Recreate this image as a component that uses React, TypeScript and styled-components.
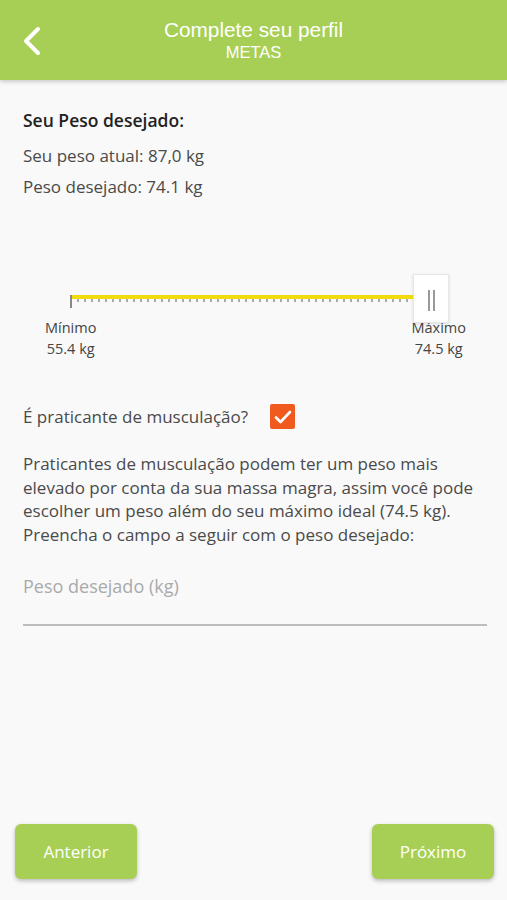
import React, { useState } from "react";
import styled, { createGlobalStyle } from "styled-components";

const GlobalStyle = createGlobalStyle`
  html, body {
    margin: 0;
    padding: 0;
    background: #f9f9f9;
  }
  body {
    font-family: "Open Sans", "Noto Sans", sans-serif;
  }
`;

const GREEN = "#a8cf55";

export default function App() {
  const [isBodybuilder, setIsBodybuilder] = useState<boolean>(true);

  return (
    <>
      <GlobalStyle />
      <Page>
        <Header>
          <BackBtn aria-label="voltar">
            <svg width="20" height="30" viewBox="0 0 20 30">
              <path
                d="M16 3 L4 15 L16 27"
                fill="none"
                stroke="#ffffff"
                strokeWidth="4"
                strokeLinecap="round"
                strokeLinejoin="round"
              />
            </svg>
          </BackBtn>
          <HeaderTitle>Complete seu perfil</HeaderTitle>
          <HeaderSub>METAS</HeaderSub>
        </Header>

        <Content>
          <SectionTitle>Seu Peso desejado:</SectionTitle>
          <InfoLine>Seu peso atual: 87,0 kg</InfoLine>
          <InfoLine>Peso desejado: 74.1 kg</InfoLine>

          <SliderBlock>
            <TrackArea>
              <Track>
                <Ticks />
              </Track>
              <Thumb>
                <Grip />
                <Grip />
              </Thumb>
            </TrackArea>
            <SliderLabels>
              <RangeLabel>
                Mínimo
                <br />
                55.4 kg
              </RangeLabel>
              <RangeLabel>
                Máximo
                <br />
                74.5 kg
              </RangeLabel>
            </SliderLabels>
          </SliderBlock>

          <CheckRow>
            <span>É praticante de musculação?</span>
            <CheckBox
              $checked={isBodybuilder}
              onClick={() => setIsBodybuilder(!isBodybuilder)}
            >
              {isBodybuilder && (
                <svg width="18" height="14" viewBox="0 0 18 14">
                  <path
                    d="M2 7.5 L6.5 12 L16 2"
                    fill="none"
                    stroke="#ffffff"
                    strokeWidth="2.6"
                    strokeLinecap="round"
                    strokeLinejoin="round"
                  />
                </svg>
              )}
            </CheckBox>
          </CheckRow>

          <Paragraph>
            Praticantes de musculação podem ter um peso mais elevado por conta
            da sua massa magra, assim você pode escolher um peso além do seu
            máximo ideal (74.5 kg). Preencha o campo a seguir com o peso
            desejado:
          </Paragraph>

          <WeightInput type="text" placeholder="Peso desejado (kg)" />
        </Content>

        <Footer>
          <NavButton>Anterior</NavButton>
          <NavButton>Próximo</NavButton>
        </Footer>
      </Page>
    </>
  );
}

const Page = styled.div`
  min-height: 900px;
  display: flex;
  flex-direction: column;
  background: #f9f9f9;
`;

const Header = styled.header`
  position: relative;
  height: 80px;
  background: ${GREEN};
  box-shadow: 0 2px 4px rgba(0, 0, 0, 0.18);
  display: flex;
  flex-direction: column;
  align-items: center;
  padding-top: 18px;
  box-sizing: border-box;
  color: #ffffff;
  font-family: "Liberation Sans", Arial, sans-serif;
`;

const BackBtn = styled.div`
  position: absolute;
  left: 22px;
  top: 26px;
  display: flex;
`;

const HeaderTitle = styled.div`
  font-size: 20.8px;
  line-height: 24px;
`;

const HeaderSub = styled.div`
  font-size: 16.5px;
  line-height: 20px;
`;

const Content = styled.main`
  padding: 28px 20px 0 23px;
  color: #4a4a4a;
`;

const SectionTitle = styled.h2`
  margin: 0 0 12px 0;
  font-size: 17.5px;
  font-weight: 600;
  color: #222222;
  line-height: 24px;
`;

const InfoLine = styled.p`
  margin: 0 0 7px 0;
  font-size: 17px;
  line-height: 24px;
`;

const SliderBlock = styled.div`
  margin-top: 96px;
  padding: 0 21px 0 22px;
`;

const TrackArea = styled.div`
  position: relative;
  margin-left: 25px;
  height: 22px;
`;

const Track = styled.div`
  width: 343px;
  height: 4px;
  background: #f2dc10;
  position: relative;
  &::before {
    content: "";
    position: absolute;
    left: 0;
    top: 0;
    width: 2px;
    height: 13px;
    background: #888888;
  }
`;

const Ticks = styled.div`
  position: absolute;
  left: 2px;
  right: 0;
  top: 4px;
  height: 3px;
  background: repeating-linear-gradient(
    to right,
    transparent 0,
    transparent 5px,
    #aaaaaa 5px,
    #aaaaaa 7px
  );
`;

const Thumb = styled.div`
  position: absolute;
  left: 343px;
  top: -21px;
  width: 36px;
  height: 49px;
  background: #ffffff;
  border: 1px solid #e6e6e6;
  box-shadow: 0 1px 3px rgba(0, 0, 0, 0.12);
  box-sizing: border-box;
  display: flex;
  justify-content: center;
  align-items: center;
  gap: 3px;
  padding-top: 4px;
`;

const Grip = styled.span`
  width: 2px;
  height: 21px;
  background: #999999;
`;

const SliderLabels = styled.div`
  display: flex;
  justify-content: space-between;
`;

const RangeLabel = styled.div`
  font-size: 14.5px;
  line-height: 21px;
  text-align: center;
  color: #444444;
`;

const CheckRow = styled.div`
  margin-top: 45px;
  display: flex;
  align-items: center;
  gap: 22px;
  font-size: 17px;
  line-height: 24px;
`;

const CheckBox = styled.div<{ $checked: boolean }>`
  width: 25px;
  height: 25px;
  border-radius: 2px;
  background: ${(p) => (p.$checked ? "#f05a1f" : "#ffffff")};
  border: ${(p) => (p.$checked ? "none" : "2px solid #999")};
  box-sizing: border-box;
  display: flex;
  justify-content: center;
  align-items: center;
  cursor: pointer;
`;

const Paragraph = styled.p`
  margin: 23px 0 0 0;
  font-size: 17px;
  line-height: 23.7px;
`;

const WeightInput = styled.input`
  display: block;
  width: 100%;
  margin-top: 22px;
  box-sizing: border-box;
  border: none;
  border-bottom: 2px solid #bdbdbd;
  background: transparent;
  outline: none;
  padding: 5px 0 26px 0;
  font-family: "Open Sans", sans-serif;
  font-size: 18px;
  color: #333;
  &::placeholder {
    color: #aaaaaa;
  }
`;

const Footer = styled.footer`
  margin-top: auto;
  display: flex;
  justify-content: space-between;
  padding: 0 13px 21px 15px;
`;

const NavButton = styled.button`
  width: 122px;
  height: 55px;
  border: none;
  border-radius: 6px;
  background: ${GREEN};
  color: #ffffff;
  font-family: "Open Sans", sans-serif;
  font-size: 17px;
  box-shadow: 0 2px 4px rgba(0, 0, 0, 0.25);
  cursor: pointer;
`;
